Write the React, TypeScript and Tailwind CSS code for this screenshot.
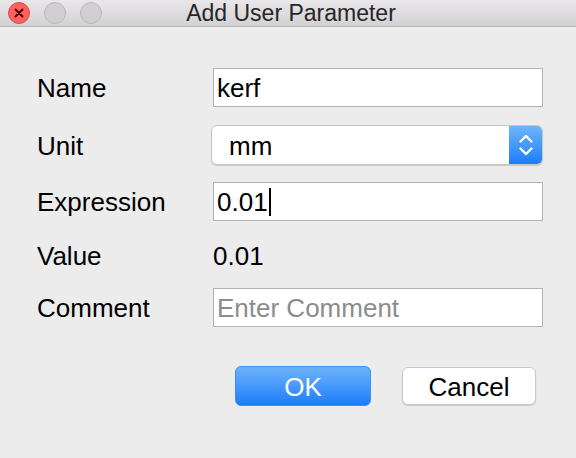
import React from "react";

export default function App() {
  const font = { fontFamily: '"Liberation Sans", Arial, sans-serif' };
  return (
    <div className="w-[576px] h-[458px] bg-[#ececec] flex flex-col overflow-hidden" style={font}>
      {/* Title bar */}
      <div className="relative h-[27px] shrink-0 bg-gradient-to-b from-[#e9e7e9] to-[#d3d1d3] border-b border-[#b8b6b8] flex items-center">
        <div className="flex items-center gap-[14px] pl-[8px]">
          <div className="w-[22px] h-[22px] rounded-full bg-[#fc615d] border border-[#de4b46] flex items-center justify-center">
            <svg width="10" height="10" viewBox="0 0 10 10">
              <path d="M1.5 1.5 L8.5 8.5 M8.5 1.5 L1.5 8.5" stroke="#4d0503" strokeWidth="2" strokeLinecap="round" />
            </svg>
          </div>
          <div className="w-[22px] h-[22px] rounded-full bg-[#d1cfd1] border border-[#bab8ba]" />
          <div className="w-[22px] h-[22px] rounded-full bg-[#d1cfd1] border border-[#bab8ba]" />
        </div>
        <div className="absolute inset-0 flex items-center justify-center text-[23px] text-[#262626] pl-[6px] pt-[1px]">
          Add User Parameter
        </div>
      </div>

      {/* Body */}
      <div className="flex flex-col pt-[41px] pl-[37px] pr-[33px] text-[26px] text-black">
        <div className="flex items-center h-[39px]">
          <div className="w-[176px] pt-[2px]">Name</div>
          <div className="w-[330px] h-[39px] bg-white border border-[#b3b3b3] flex items-center pl-[3px] pt-[2px]">kerf</div>
        </div>
        <div className="flex items-center h-[40px] mt-[18px]">
          <div className="w-[174px] pt-[2px]">Unit</div>
          <div className="w-[332px] h-[40px] bg-white rounded-[6px] border border-[#c6c6c6] shadow-[0_1px_1px_rgba(0,0,0,0.15)] flex items-center overflow-hidden">
            <div className="flex-1 pl-[17px] pt-[2px]">mm</div>
            <div className="w-[33px] h-full bg-gradient-to-b from-[#6cb4fb] to-[#177dfb] flex items-center justify-center">
              <svg width="16" height="26" viewBox="0 0 16 26">
                <path d="M2.5 9.5 L8 4 L13.5 9.5" fill="none" stroke="white" strokeWidth="2.4" strokeLinecap="round" strokeLinejoin="round" />
                <path d="M2.5 16.5 L8 22 L13.5 16.5" fill="none" stroke="white" strokeWidth="2.4" strokeLinecap="round" strokeLinejoin="round" />
              </svg>
            </div>
          </div>
        </div>
        <div className="flex items-center h-[39px] mt-[17px]">
          <div className="w-[176px] pt-[2px]">Expression</div>
          <div className="w-[330px] h-[39px] bg-white border border-[#b3b3b3] flex items-center pl-[3px]">
            <span className="pt-[2px]">0.01</span>
            <span className="w-[2px] h-[28px] bg-black ml-[1px]" />
          </div>
        </div>
        <div className="flex items-center h-[37px] mt-[16px]">
          <div className="w-[176px] pt-[2px]">Value</div>
          <div className="pt-[2px]">0.01</div>
        </div>
        <div className="flex items-center h-[39px] mt-[14px]">
          <div className="w-[176px] pt-[2px]">Comment</div>
          <div className="w-[330px] h-[39px] bg-white border border-[#b3b3b3] flex items-center pl-[3px] pt-[2px] text-[#8c8c8c]">Enter Comment</div>
        </div>
        <div className="flex mt-[39px] pl-[198px]">
          <div className="w-[136px] h-[40px] rounded-[6px] bg-gradient-to-b from-[#6cb3fa] to-[#1a7cfa] border border-[#3d8ff5] text-white flex items-center justify-center pt-[2px]">OK</div>
          <div className="w-[134px] h-[38px] mt-[1px] ml-[31px] rounded-[6px] bg-white border border-[#c8c8c8] shadow-[0_1px_1px_rgba(0,0,0,0.15)] flex items-center justify-center pt-[2px]">Cancel</div>
        </div>
      </div>
    </div>
  );
}
